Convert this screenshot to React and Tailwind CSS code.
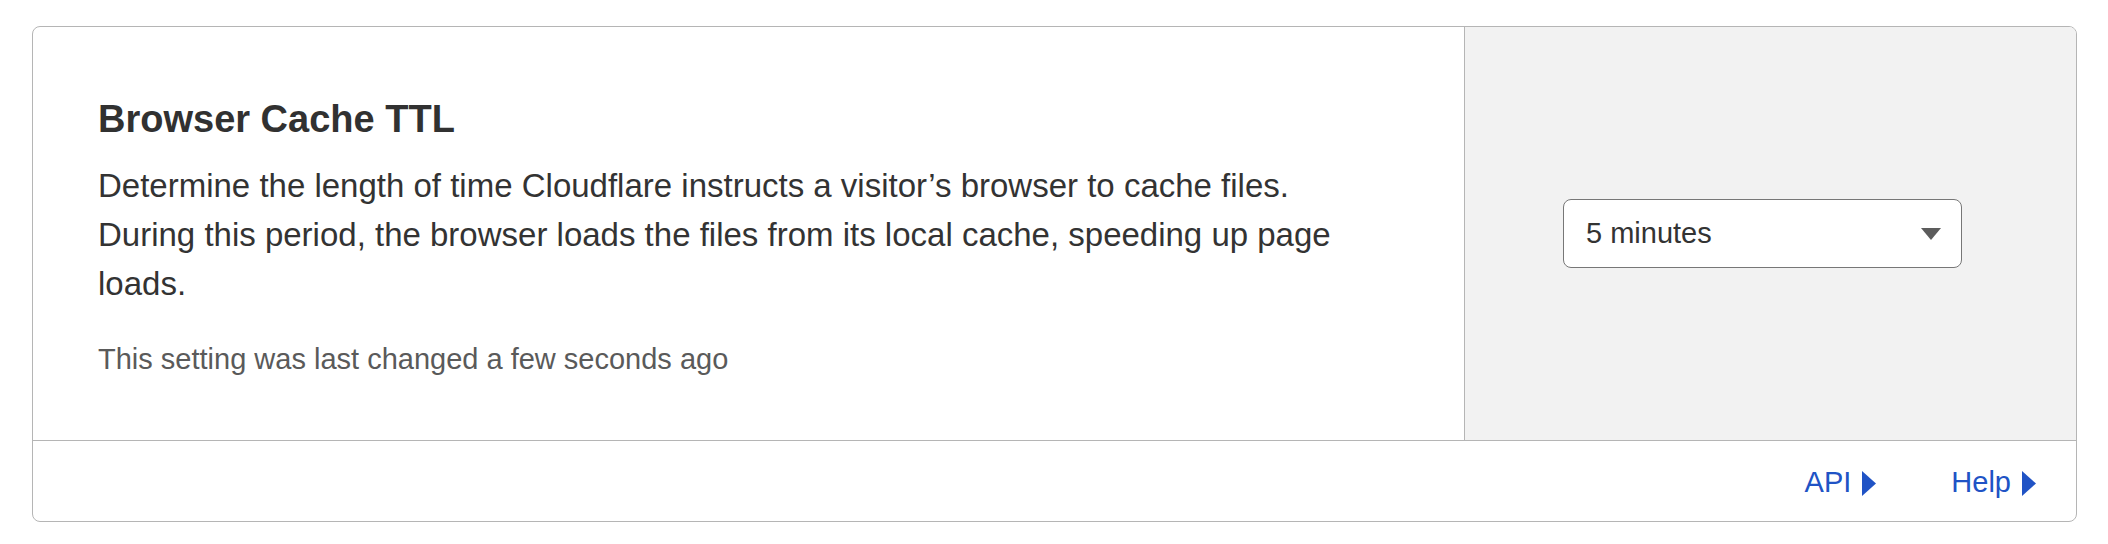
export default function App() {
    return (
        <div className="w-[2108px] h-[544px] bg-white pt-[26px] pl-[32px] font-['Liberation_Sans',Arial,sans-serif]">
            {/* Setting card */}
            <div className="w-[2045px] rounded-[8px] border border-[#b5b5b5] overflow-hidden">
                <div className="flex border-b border-[#b5b5b5]">
                    {/* Description column */}
                    <div className="w-[1431px] pl-[65px] pr-[65px] pt-[68px] pb-[59px] text-[#333333]">
                        <h3 className="text-[38px] leading-[48px] font-bold text-[#313131]">Browser Cache TTL</h3>
                        <p className="mt-[18px] max-w-[1262px] text-[33px] leading-[49px]">
                            Determine the length of time Cloudflare instructs a visitor’s browser to cache files. During this period, the browser loads the files from its local cache, speeding up page loads.
                        </p>
                        <p className="mt-[29px] text-[29px] leading-[44px] text-[#5a5a5a]">This setting was last changed a few seconds ago</p>
                    </div>

                    {/* Control column */}
                    <div className="flex-1 flex items-center pl-[98px] bg-[#f2f2f2] border-l border-[#b5b5b5]">
                        <div className="w-[399px] h-[69px] flex items-center justify-between pl-[22px] pr-[20px] bg-white rounded-[8px] border-[1.5px] border-[#777777]">
                            <span className="text-[29px] text-[#333333]">5 minutes</span>
                            <svg width="20" height="12" viewBox="0 0 20 12">
                                <path d="M0 0 L20 0 L10 12 Z" fill="#5c5c5c" />
                            </svg>
                        </div>
                    </div>
                </div>

                {/* Footer links */}
                <div className="h-[80px] flex items-center justify-end gap-[75px] pr-[40px] pt-[4px] text-[29px] text-[#2053c5]">
                    {["API", "Help"].map((label) => (
                        <a key={label} href="#" className="flex items-center gap-[11px]">
                            <span>{label}</span>
                            <svg width="14" height="25" viewBox="0 0 14 25">
                                <path d="M0 0 L14 12.5 L0 25 Z" fill="#2053c5" />
                            </svg>
                        </a>
                    ))}
                </div>
            </div>
        </div>
    );
}
